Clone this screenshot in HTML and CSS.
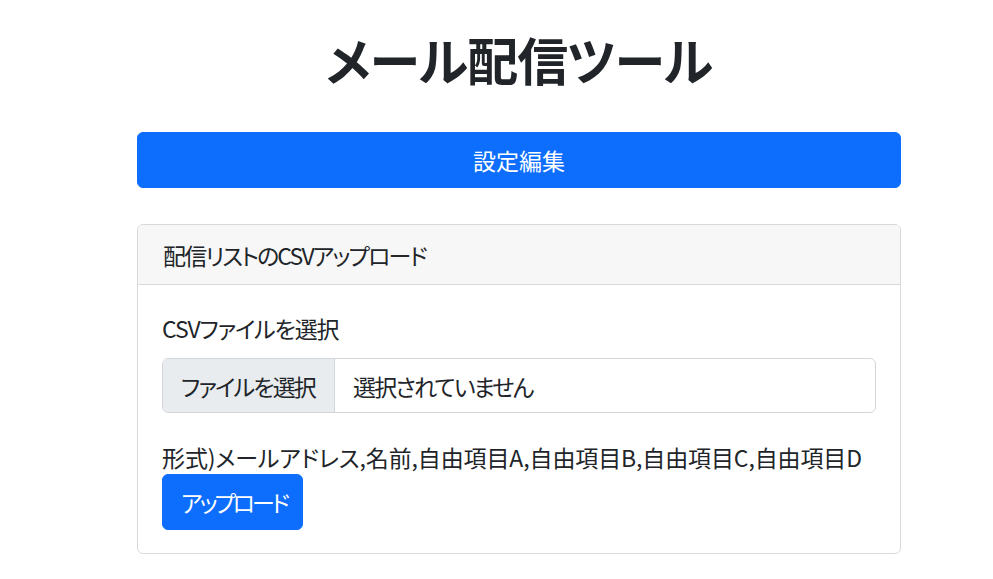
FILE: index.html
```html
<!DOCTYPE html>
<html lang="ja">
<head>
<meta charset="utf-8">
<title>メール配信ツール</title>
<link rel="stylesheet" href="styles.css">
</head>
<body>
<div class="container">
  <h1 class="title">メール配信ツール</h1>
  <button class="btn btn-block" type="button">設定編集</button>
  <div class="card">
    <div class="card-header"><span class="tight">配信リストのCSVアップロード</span></div>
    <div class="card-body">
      <div class="form-label tight-sm">CSVファイルを選択</div>
      <div class="file-input">
        <span class="file-button tight">ファイルを選択</span>
        <span class="file-name tight">選択されていません</span>
      </div>
      <p class="format">形式)メールアドレス,名前,自由項目A,自由項目B,自由項目C,自由項目D</p>
      <button class="btn btn-upload" type="button">アップロード</button>
    </div>
  </div>
</div>
</body>
</html>
```
FILE: styles.css
```css
html, body {
  margin: 0;
  padding: 0;
  background: #fff;
}
body {
  font-family: "Noto Sans CJK JP", "Noto Sans", sans-serif;
  font-feature-settings: "palt";
  font-size: 23px;
  line-height: 34px;
  color: #212529;
}
.container {
  width: 764px;
  margin: 0 0 0 137px;
  display: flex;
  flex-direction: column;
}
.title {
  margin: 27px 0 0 0;
  height: 105px;
  font-size: 51px;
  line-height: 64px;
  font-weight: 700;
  text-align: center;
  letter-spacing: -0.02em;
}
.tight {
  letter-spacing: -0.08em;
}
.tight-sm {
  letter-spacing: -0.05em;
}
.format {
  margin: 27px 0 0 0;
  letter-spacing: -0.005em;
}
.btn {
  font-family: inherit;
  font-feature-settings: "palt";
  font-size: 23px;
  line-height: 34px;
  color: #fff;
  background: #0d6efd;
  border: 1px solid #0d6efd;
  border-radius: 6px;
  padding: 10px 18px;
  align-self: flex-start;
  cursor: pointer;
}
.btn-block {
  align-self: stretch;
  width: 100%;
}
.btn-upload {
  letter-spacing: -0.13em;
  padding: 10px 15px 10px 18px;
}
.card {
  margin-top: 36px;
  border: 1px solid #d8d9da;
  border-radius: 6px;
  overflow: hidden;
}
.card-header {
  height: 59px;
  padding: 0 25px;
  display: flex;
  align-items: center;
  background: #f7f7f7;
  border-bottom: 1px solid #d8d9da;
}
.card-body {
  padding: 26px 24px 23px 24px;
  display: flex;
  flex-direction: column;
}
.form-label {
  margin-bottom: 13px;
}
.file-input {
  height: 53px;
  border: 1px solid #d3d6da;
  border-radius: 6px;
  display: flex;
  overflow: hidden;
}
.file-button {
  display: flex;
  align-items: center;
  padding: 0 19px 0 18px;
  background: #e9ecef;
  border-right: 1px solid #d3d6da;
}
.file-name {
  display: flex;
  align-items: center;
  padding: 0 18px;
}
```
